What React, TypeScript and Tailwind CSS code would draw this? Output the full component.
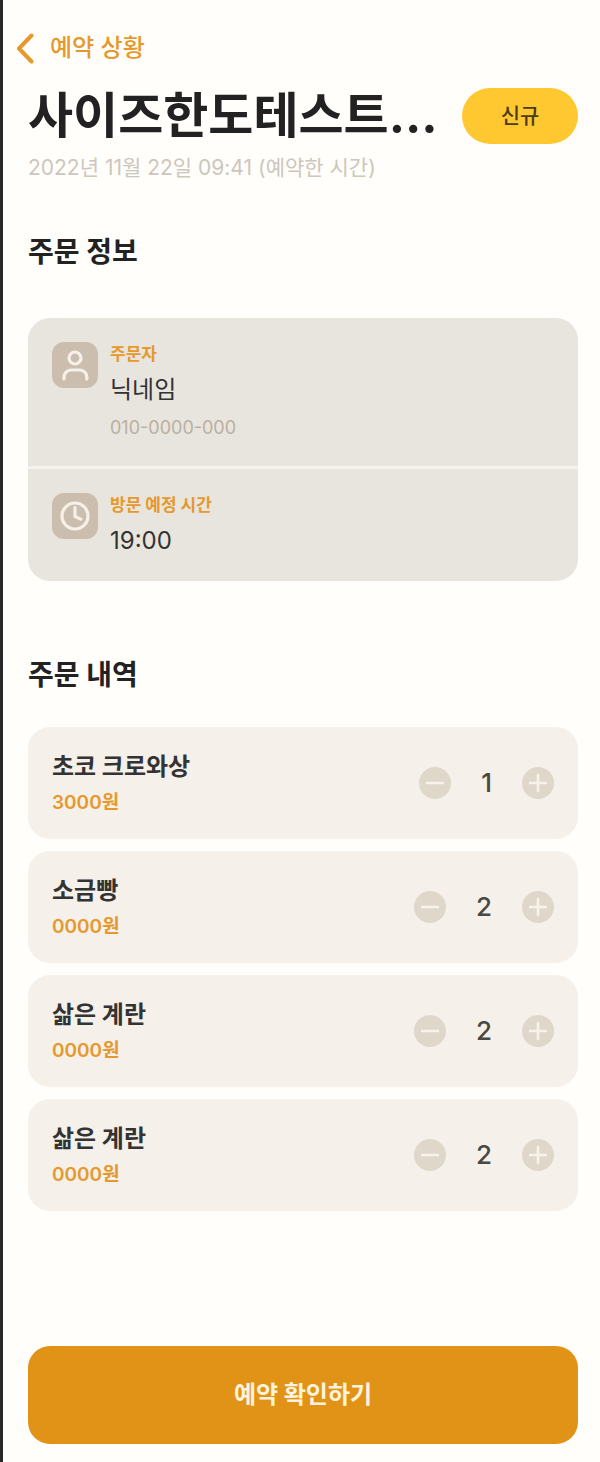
import React, { useState } from "react";

interface OrderItem {
  id: number;
  name: string;
  price: string;
  count: number;
}

const INITIAL_ITEMS: OrderItem[] = [
  { id: 1, name: "초코 크로와상", price: "3000원", count: 1 },
  { id: 2, name: "소금빵", price: "0000원", count: 2 },
  { id: 3, name: "삶은 계란", price: "0000원", count: 2 },
  { id: 4, name: "삶은 계란", price: "0000원", count: 2 },
];

const iconProps = {
  fill: "none",
  stroke: "currentColor",
  strokeLinecap: "round" as const,
  strokeLinejoin: "round" as const,
  "aria-hidden": true,
};

const BackIcon = () => (
  <svg width="18" height="32" viewBox="0 0 18 32" strokeWidth={4} {...iconProps}>
    <path d="M15.5 3.5 3 16.5l12.5 13" />
  </svg>
);

const UserIcon = () => (
  <svg width="46" height="46" viewBox="0 0 46 46" strokeWidth={3.2} {...iconProps}>
    <circle cx="23" cy="16" r="6" />
    <path d="M12 37v-2a7 7 0 0 1 7-7h8.8a7 7 0 0 1 7 7v2" />
  </svg>
);

const ClockIcon = () => (
  <svg width="46" height="46" viewBox="0 0 46 46" strokeWidth={3.2} {...iconProps}>
    <circle cx="23" cy="23" r="13" />
    <path d="M23 14.5v9l5.8 2.6" />
  </svg>
);

interface InfoRowProps {
  icon: React.ReactNode;
  label: string;
  value: string;
  sub?: string;
}

const InfoRow: React.FC<InfoRowProps> = ({ icon, label, value, sub }) => (
  <div className="flex gap-3 px-6 pt-6 pb-5">
    <div className="h-[46px] w-[46px] shrink-0 rounded-xl bg-[#cbbeae] text-[#f6f0e9]">{icon}</div>
    <dl>
      <dt className="text-[17px] leading-6 font-bold text-[#e5992c]">{label}</dt>
      <dd className="mt-1 text-[24px] leading-10 text-[#333333]">{value}</dd>
      {sub && <dd className="text-[18px] leading-9 text-[#b9b0a2]">{sub}</dd>}
    </dl>
  </div>
);

interface StepButtonProps {
  label: string;
  path: string;
  onClick: () => void;
}

const StepButton: React.FC<StepButtonProps> = ({ label, path, onClick }) => (
  <button type="button" aria-label={label} onClick={onClick} className="grid h-8 w-8 place-items-center rounded-full bg-[#dfd7ca] text-[#f7f2ea]">
    <svg width="32" height="32" viewBox="0 0 32 32" strokeWidth={2.6} {...iconProps}>
      <path d={path} />
    </svg>
  </button>
);

export default function App() {
  const [items, setItems] = useState<OrderItem[]>(INITIAL_ITEMS);

  const changeCount = (id: number, diff: number) => {
    setItems((prev) => prev.map((item) => (item.id === id ? { ...item, count: Math.max(0, item.count + diff) } : item)));
  };

  return (
    <main className="flex min-h-screen flex-col border-l-[3px] border-[#2a2828] bg-[#fffefb] pt-8 pr-[22px] pb-[18px] pl-[25px] font-['Inter','Noto_Sans_CJK_KR',sans-serif] text-[#222222]">
      <a href="#reservations" className="-ml-3 flex items-center gap-4 self-start text-[24px] leading-8 font-medium text-[#e5992c]">
        <BackIcon />
        예약 상황
      </a>

      <header>
        <div className="mt-5 flex items-center justify-between gap-4">
          <h1 className="text-[49px] leading-16 font-bold whitespace-nowrap">사이즈한도테스트...</h1>
          <span className="grid h-14 w-[116px] shrink-0 place-items-center rounded-full bg-[#ffc831] text-[21px] leading-8 font-medium text-[#4a3c1c]">신규</span>
        </div>
        <p className="mt-1 text-[21px] leading-8 text-[#cdc6bc]">2022년 11월 22일 09:41 (예약한 시간)</p>
      </header>

      <section className="mt-12">
        <h2 className="text-[28px] leading-10 font-bold">주문 정보</h2>
        <div className="mt-[46px] divide-y-3 divide-[#f5f2ee] rounded-[22px] bg-[#e8e5df]">
          <InfoRow icon={<UserIcon />} label="주문자" value="닉네임" sub="010-0000-000" />
          <InfoRow icon={<ClockIcon />} label="방문 예정 시간" value="19:00" />
        </div>
      </section>

      <section className="mt-[74px]">
        <h2 className="text-[28px] leading-10 font-bold">주문 내역</h2>
        <ul className="mt-8 flex flex-col gap-3">
          {items.map((item) => (
            <li key={item.id} className="flex items-center justify-between rounded-[22px] bg-[#f5f0ea] px-6 py-5">
              <div>
                <p className="text-[24px] leading-10 font-bold text-[#333333]">{item.name}</p>
                <p className="text-[19px] leading-8 font-semibold text-[#e5992c]">{item.price}</p>
              </div>
              <div className="flex items-center gap-[30px]">
                <StepButton label={`${item.name} 빼기`} path="M8 16h16" onClick={() => changeCount(item.id, -1)} />
                <span className="text-[26px] leading-8 font-medium text-[#4a4844]">{item.count}</span>
                <StepButton label={`${item.name} 더하기`} path="M8 16h16M16 8v16" onClick={() => changeCount(item.id, 1)} />
              </div>
            </li>
          ))}
        </ul>
      </section>

      <button type="button" className="mt-auto h-[98px] w-full shrink-0 rounded-[22px] bg-[#e19318] text-[24px] leading-8 font-bold text-[#fff3df]">
        예약 확인하기
      </button>
    </main>
  );
}
